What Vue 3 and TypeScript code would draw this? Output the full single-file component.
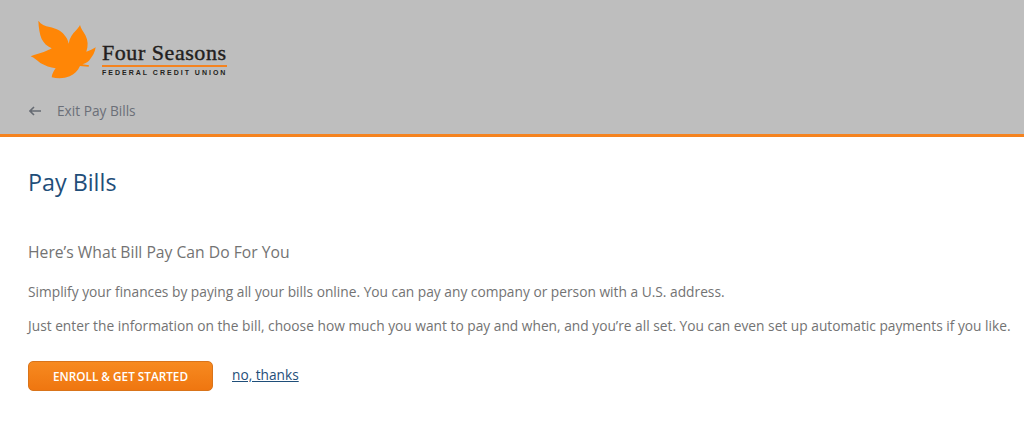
<script setup lang="ts">
const paragraphs: string[] = [
  'Simplify your finances by paying all your bills online. You can pay any company or person with a U.S. address.',
  'Just enter the information on the bill, choose how much you want to pay and when, and you’re all set. You can even set up automatic payments if you like.',
]
</script>

<template>
  <div class="page">
    <header class="header">
      <div class="logo">
        <svg class="leaf" width="72" height="70" viewBox="0 0 216 210">
          <path
            d="M40 17 C48 28 60 33 74 36 C92 40 108 46 118 60 C125 68 129 76 131 86 C134 68 142 56 152 47 C158 41 162 36 165 30 C168 42 175 50 182 62 C189 76 190 92 184 110 C194 107 204 102 212 97 C210 112 203 124 192 137 C186 143 178 146 172 148 L192 151 L191 155 L165 153 C158 168 148 178 134 184 C118 191 98 191 80 187 C81 177 86 168 92 160 C76 158 60 152 46 144 C36 136 28 129 17 124 C30 118 44 116 56 111 C66 107 74 104 80 100 C66 94 56 84 50 72 C44 58 41 38 40 17 Z"
            fill="#ff8606"
          />
        </svg>
        <div class="wordmark">
          <div class="wordmark-name">Four Seasons</div>
          <div class="wordmark-sub">FEDERAL CREDIT UNION</div>
        </div>
      </div>
      <a class="exit">
        <svg width="12" height="10" viewBox="0 0 12 10">
          <path d="M12 5H1M5 1L1 5L5 9" fill="none" stroke="#666b73" stroke-width="1.6" />
        </svg>
        <span>Exit Pay Bills</span>
      </a>
    </header>

    <main class="content">
      <h1 class="title">Pay Bills</h1>
      <h2 class="subtitle">Here’s What Bill Pay Can Do For You</h2>
      <p v-for="(text, index) in paragraphs" :key="index" class="text">{{ text }}</p>
      <div class="actions">
        <button class="enroll" type="button">ENROLL &amp; GET STARTED</button>
        <a class="decline">no, thanks</a>
      </div>
    </main>
  </div>
</template>

<style>
html,
body {
  margin: 0;
  background: #fff;
}
</style>

<style scoped>
.page {
  font-family: "Open Sans", sans-serif;
  white-space: nowrap;
  overflow: hidden;
  height: 422px;
}

.header {
  height: 119px;
  background: #bebebe;
  border-bottom: 3px solid #f5831f;
  padding: 15px 0 0 25px;
  box-sizing: content-box;
}

.logo {
  display: flex;
  align-items: flex-start;
  height: 70px;
}

.wordmark {
  margin: 26px 0 0 5px;
  width: 125px;
}

.wordmark-name {
  font-family: "Liberation Serif", serif;
  font-size: 22px;
  line-height: 24px;
  font-weight: 400;
  letter-spacing: 0.55px;
  -webkit-text-stroke: 0.4px #231f20;
  color: #231f20;
  border-bottom: 2px solid #f5831f;
}

.wordmark-sub {
  font-family: "Liberation Sans", sans-serif;
  font-size: 7px;
  font-weight: 700;
  line-height: 12px;
  letter-spacing: 2px;
  color: #231f20;
}

.exit {
  display: flex;
  align-items: center;
  gap: 16px;
  margin-top: 16px;
  margin-left: 4px;
  font-size: 13.7px;
  line-height: 19px;
  color: #6b6f78;
}

.content {
  padding: 0 0 0 28px;
}

.title {
  margin: 27px 0 0;
  font-size: 23.3px;
  line-height: 36px;
  font-weight: 400;
  color: #1f4e79;
}

.subtitle {
  margin: 40px 0 0;
  font-size: 15.7px;
  line-height: 24px;
  font-weight: 400;
  color: #737373;
}

.text {
  margin: 18px 0 0;
  font-size: 13.75px;
  line-height: 20px;
  color: #737373;
}

.text + .text {
  margin-top: 14px;
}

.actions {
  display: flex;
  align-items: center;
  gap: 19px;
  margin-top: 25px;
}

.enroll {
  width: 185px;
  height: 30px;
  padding: 0;
  border: 1px solid #d9741a;
  border-radius: 5px;
  background: linear-gradient(#f78a20, #ef7610);
  color: #fff;
  font-family: inherit;
  font-size: 11.75px;
  font-weight: 600;
}

.decline {
  margin-bottom: 3px;
  font-size: 13.7px;
  color: #1f4e79;
  text-decoration: underline;
}
</style>
